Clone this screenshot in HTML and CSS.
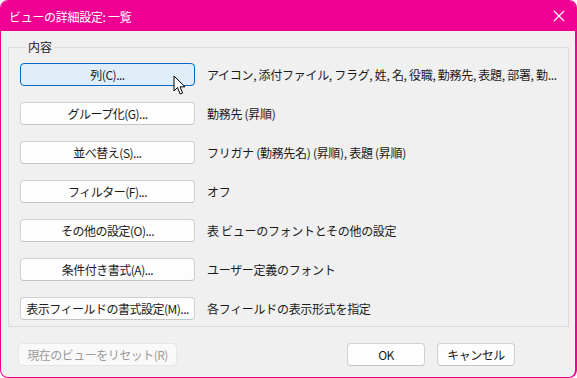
FILE: index.html
```html
<!DOCTYPE html>
<html lang="ja">
<head>
    <meta charset="UTF-8">
    <title>ビューの詳細設定: 一覧</title>
    <link rel="stylesheet" href="styles.css">
</head>
<body>
    <div class="window">
        <!-- Title bar -->
        <div class="titlebar">
            <span class="title">ビューの詳細設定: 一覧</span>
            <svg class="close" width="12" height="12" viewBox="0 0 12 12">
                <path d="M1 1 L11 11 M11 1 L1 11" stroke="#fff" stroke-width="1.1" fill="none"/>
            </svg>
        </div>

        <div class="body">
            <!-- Content group -->
            <fieldset class="group">
                <legend>内容</legend>

                <div class="row">
                    <button class="btn hover">列(C)...</button>
                    <span class="desc">アイコン, 添付ファイル, フラグ, 姓, 名, 役職, 勤務先, 表題, 部署, 勤...</span>
                    <svg class="cursor" width="14" height="21" viewBox="0 0 14 21">
                        <path d="M1 1 L1 16 L4.5 12.5 L7.2 19 L9.6 18 L7 11.8 L12 11.8 Z" fill="#fff" stroke="#000" stroke-width="1" stroke-linejoin="round"/>
                    </svg>
                </div>

                <div class="row">
                    <button class="btn">グループ化(G)...</button>
                    <span class="desc">勤務先 (昇順)</span>
                </div>

                <div class="row">
                    <button class="btn">並べ替え(S)...</button>
                    <span class="desc">フリガナ (勤務先名) (昇順), 表題 (昇順)</span>
                </div>

                <div class="row">
                    <button class="btn">フィルター(F)...</button>
                    <span class="desc">オフ</span>
                </div>

                <div class="row">
                    <button class="btn">その他の設定(O)...</button>
                    <span class="desc">表 ビューのフォントとその他の設定</span>
                </div>

                <div class="row">
                    <button class="btn">条件付き書式(A)...</button>
                    <span class="desc">ユーザー定義のフォント</span>
                </div>

                <div class="row">
                    <button class="btn">表示フィールドの書式設定(M)...</button>
                    <span class="desc">各フィールドの表示形式を指定</span>
                </div>
            </fieldset>

            <!-- Footer buttons -->
            <div class="footer">
                <button class="btn reset" disabled>現在のビューをリセット(R)</button>
                <div class="actions">
                    <button class="btn small">OK</button>
                    <button class="btn small">キャンセル</button>
                </div>
            </div>
        </div>
    </div>
</body>
</html>
```

FILE: styles.css
```css
/* Reset */
* {
    margin: 0;
    padding: 0;
    box-sizing: border-box;
}

html, body {
    width: 577px;
    height: 378px;
    overflow: hidden;
    background: #fff;
    font-family: "Noto Sans CJK JP", "Noto Sans", sans-serif;
    font-size: 12px;
    color: #1a1a1a;
}

/* Window frame */
.window {
    width: 577px;
    height: 378px;
    border: 1px solid #ef0093;
    border-right-width: 2px;
    border-radius: 8px;
    background: #f0f0f0;
    display: flex;
    flex-direction: column;
    overflow: hidden;
}

.titlebar {
    height: 30px;
    background: #ef0093;
    color: #fff;
    display: flex;
    align-items: center;
    justify-content: space-between;
    padding: 0 10px 0 8px;
    flex-shrink: 0;
}

.title {
    font-size: 12px;
    letter-spacing: -0.3px;
}

.body {
    flex: 1;
    padding: 9px 6px 0 7px;
    display: flex;
    flex-direction: column;
}

/* Group box */
.group {
    border: 1px solid #dadada;
    padding: 9px 0 6px 11px;
    display: flex;
    flex-direction: column;
    gap: 16px;
}

.group legend {
    margin-left: 6px;
    padding: 0 2px;
    line-height: 14px;
    color: #1a1a1a;
}

.row {
    display: flex;
    align-items: center;
    gap: 12px;
    position: relative;
}

.desc {
    white-space: nowrap;
    letter-spacing: -0.3px;
}

/* Buttons */
.btn {
    font-family: inherit;
    font-size: 12px;
    color: #1a1a1a;
    height: 23px;
    width: 175px;
    background: #fdfdfd;
    border: 1px solid #d0d0d0;
    border-bottom-color: #c4c4c4;
    border-radius: 4px;
    letter-spacing: -0.5px;
    white-space: nowrap;
    flex-shrink: 0;
}

.btn.hover {
    background: #e0eef9;
    border-color: #0067c0;
}

.btn.reset {
    width: 159px;
    background: #f9f9f9;
    border-color: #e6e6e6;
    color: #9b9b9b;
}

.btn.small {
    width: 78px;
}

/* Mouse pointer over the first button */
.cursor {
    position: absolute;
    left: 153px;
    top: 12px;
}

.footer {
    display: flex;
    justify-content: space-between;
    align-items: center;
    margin-top: 16px;
    padding: 0 54px 0 10px;
}

.actions {
    display: flex;
    gap: 12px;
}
```
